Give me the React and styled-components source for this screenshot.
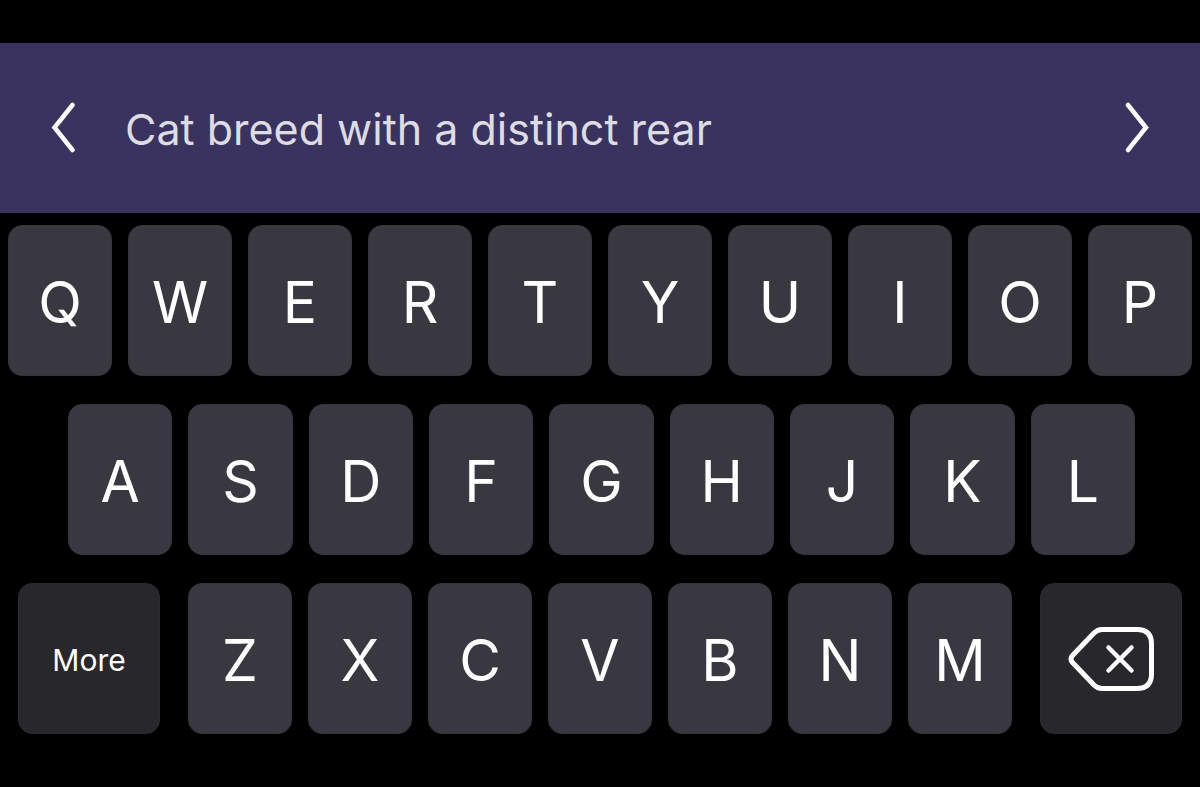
import React from "react";
import styled, { createGlobalStyle } from "styled-components";

const GlobalStyle = createGlobalStyle`
  *, *::before, *::after { box-sizing: border-box; }
  body {
    margin: 0;
    background: #000;
    color: #fff;
    font-family: Inter, "Liberation Sans", sans-serif;
  }
`;

const Screen = styled.main`
  min-height: 100vh;
  padding-top: 43px;
  background: #000;
`;

const ClueBar = styled.header`
  display: flex;
  align-items: center;
  height: 170px;
  padding: 0 40px;
  background: #3a3360;
`;

const ArrowButton = styled.button`
  display: flex;
  align-items: center;
  justify-content: center;
  width: 48px;
  height: 64px;
  flex: none;
  padding: 0;
  border: 0;
  background: transparent;
  color: #fff;
  cursor: pointer;
`;

const Clue = styled.p`
  flex: 1;
  min-width: 0;
  margin: 0;
  padding: 2px 36px 0 37px;
  color: #dddce3;
  font-size: 43px;
  line-height: 56px;
`;

const Keyboard = styled.section`
  display: flex;
  flex-direction: column;
  gap: 28px;
  padding: 12px 0 52px;
`;

const KeyRow = styled.div`
  display: flex;
  gap: ${({ $gap = 16 }) => $gap}px;
  padding: 0 ${({ $right }) => $right}px 0 ${({ $left }) => $left}px;
`;

const LetterGroup = styled.div`
  display: flex;
  flex: 1;
  gap: 16px;
  min-width: 0;
`;

const Key = styled.button`
  display: flex;
  align-items: center;
  justify-content: center;
  flex: 1 1 0;
  min-width: 0;
  height: 151px;
  padding: 4px 0 0;
  border: 1px solid #34343a;
  border-radius: 14px;
  background: #393841;
  color: #fff;
  font-family: inherit;
  font-size: 57px;
  line-height: 64px;
  cursor: pointer;
`;

const ActionKey = styled(Key)`
  flex: none;
  width: 142px;
  padding: 2px 0 0;
  border-color: #2b2b2f;
  background: #28272b;
  font-size: 30px;
  line-height: 36px;
`;

const letterKeys = (letters) =>
  letters.split("").map((letter) => (
    <Key key={letter} type="button">
      {letter}
    </Key>
  ));

const Chevron = ({ d }) => (
  <svg width="28" height="52" viewBox="0 0 28 52" fill="none" aria-hidden="true">
    <path d={d} stroke="currentColor" strokeWidth="4.500" strokeLinecap="round" />
  </svg>
);

const BackspaceIcon = () => (
  <svg width="88" height="68" viewBox="0 0 88 68" fill="none" aria-hidden="true">
    <path
      d="M35 3.500H70Q84.500 3.500 84.500 18V48Q84.500 62.500 70 62.500H35Q30.500 62.500 27 59L5.500 36.500Q2.500 33 5.500 29.500L27 7Q30.500 3.500 35 3.500Z"
      stroke="currentColor"
      strokeWidth="5"
      strokeLinejoin="round"
    />
    <path d="M41.500 21.500L64.500 44.500M64.500 21.500L41.500 44.500" stroke="currentColor" strokeWidth="4.500" strokeLinecap="round" />
  </svg>
);

export default function App() {
  return (
    <>
      <GlobalStyle />
      <Screen>
        <ClueBar>
          <ArrowButton type="button" aria-label="Previous clue">
            <Chevron d="M22.500 3L4.500 25.500L22.500 48" />
          </ArrowButton>
          <Clue>Cat breed with a distinct rear</Clue>
          <ArrowButton type="button" aria-label="Next clue">
            <Chevron d="M6 3L24 25.500L6 48" />
          </ArrowButton>
        </ClueBar>
        <Keyboard aria-label="Keyboard">
          <KeyRow $left={8} $right={8}>{letterKeys("QWERTYUIOP")}</KeyRow>
          <KeyRow $left={68} $right={65}>{letterKeys("ASDFGHJKL")}</KeyRow>
          <KeyRow $left={18} $right={18} $gap={28}>
            <ActionKey type="button">More</ActionKey>
            <LetterGroup>{letterKeys("ZXCVBNM")}</LetterGroup>
            <ActionKey type="button" aria-label="Backspace">
              <BackspaceIcon />
            </ActionKey>
          </KeyRow>
        </Keyboard>
      </Screen>
    </>
  );
}
